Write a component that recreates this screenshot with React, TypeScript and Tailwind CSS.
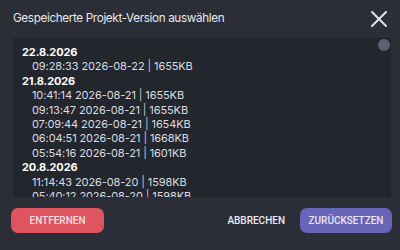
import React from 'react'

type Version = { time: string; date: string; size: string }
type Group = { day: string; versions: Version[] }

const groups: Group[] = [
  { day: '22.8.2026', versions: [{ time: '09:28:33', date: '2026-08-22', size: '1655KB' }] },
  {
    day: '21.8.2026',
    versions: [
      { time: '10:41:14', date: '2026-08-21', size: '1655KB' },
      { time: '09:13:47', date: '2026-08-21', size: '1655KB' },
      { time: '07:09:44', date: '2026-08-21', size: '1654KB' },
      { time: '06:04:51', date: '2026-08-21', size: '1668KB' },
      { time: '05:54:16', date: '2026-08-21', size: '1601KB' },
    ],
  },
  {
    day: '20.8.2026',
    versions: [
      { time: '11:14:43', date: '2026-08-20', size: '1598KB' },
      { time: '05:40:12', date: '2026-08-20', size: '1598KB' },
    ],
  },
]

export default function App() {
  return (
    <div
      className="w-[400px] h-[250px] bg-[#2b2e37] flex flex-col text-[#e4e4e7] overflow-hidden"
      style={{ fontFamily: 'Inter, "Noto Sans", sans-serif' }}
    >
      {/* header */}
      <div className="h-[38px] flex items-center justify-between pl-[13px] pr-[12px]">
        <span className="text-[11.7px] tracking-[-0.35px] text-[#e8e8ea]">Gespeicherte Projekt-Version auswählen</span>
        <svg width="18" height="18" viewBox="0 0 18 18" className="text-[#e2e2e4]">
          <path d="M2 2 L16 16 M16 2 L2 16" stroke="currentColor" strokeWidth="2" strokeLinecap="round" />
        </svg>
      </div>

      {/* list */}
      <div className="relative mx-[13px] w-[378px] h-[159px] bg-[#23262d] overflow-hidden pt-[7px] pl-[9px] text-[11px] tracking-[-0.1px] leading-[14.4px]">
        {groups.map((g) => (
          <div key={g.day}>
            <div className="font-bold text-white">{g.day}</div>
            {g.versions.map((v) => (
              <div key={v.time} className="pl-[10px] text-[#dcdce0]">
                {v.time} {v.date} <span className="text-[#c4c4c9]">|</span> {v.size}
              </div>
            ))}
          </div>
        ))}
        <div className="absolute right-[1px] top-[1px] w-[12px] h-[12px] rounded-full bg-[#5d6170]" />
      </div>

      {/* footer */}
      <div
        className="flex items-center justify-between pl-[11px] pr-[8px] mt-[11px]"
        style={{ fontFamily: 'Roboto, "Noto Sans", sans-serif' }}
      >
        <button className="w-[93px] h-[25px] rounded-[7px] bg-[#de5560] text-[10px] font-medium text-[#f6dfe1]">
          ENTFERNEN
        </button>
        <div className="flex items-center gap-[15px]">
          <button className="text-[10px] font-medium text-[#ececef]">ABBRECHEN</button>
          <button className="w-[92px] h-[25px] rounded-[7px] bg-[#6864b7] text-[10px] font-medium text-[#e6e5f6]">
            ZURÜCKSETZEN
          </button>
        </div>
      </div>
    </div>
  )
}
